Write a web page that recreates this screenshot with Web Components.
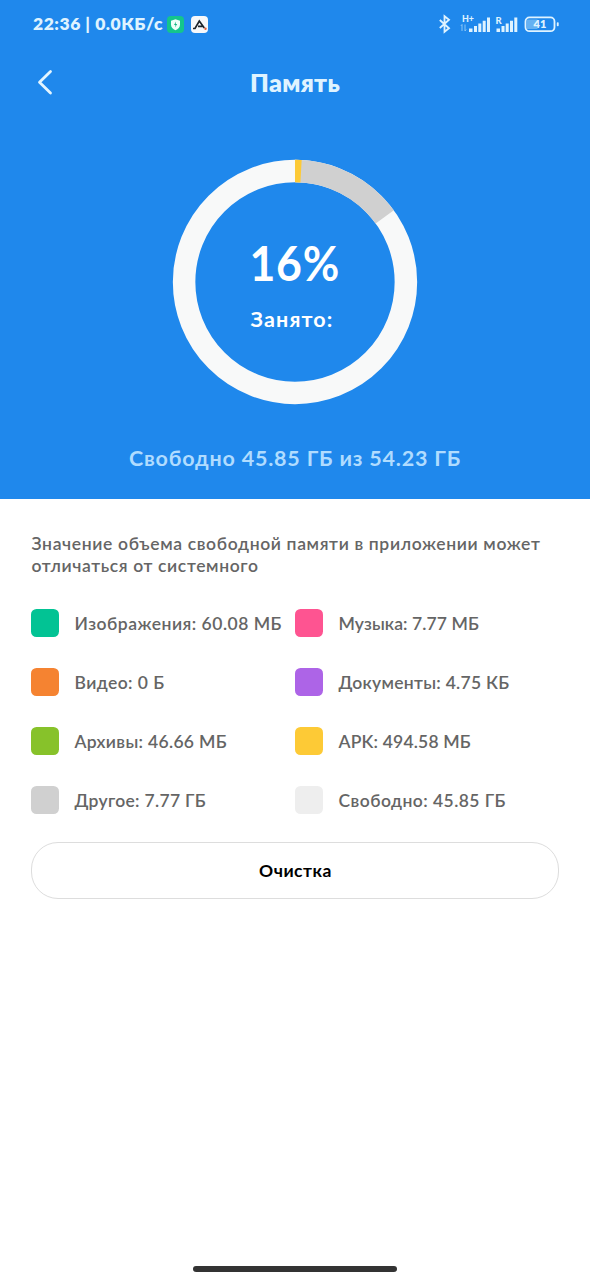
<!DOCTYPE html>
<html lang="ru">
<head>
<meta charset="utf-8">
<title>Память</title>
<style>
html,body{margin:0;background:#fff}
body{font-family:Lato,"Noto Sans",sans-serif;font-weight:600}
</style>
</head>
<body>
<storage-screen></storage-screen>
<script>
const make=(name,html,after)=>{
  const t=document.createElement('template');
  t.innerHTML=html;
  customElements.define(name,class extends HTMLElement{
    connectedCallback(){
      if(!this.shadowRoot)this.attachShadow({mode:'open'}).append(t.content.cloneNode(true));
      if(after)after(this,this.shadowRoot);
    }
  });
};

/* One line of text tracked out to the given width. */
make('tracked-text',`<style>:host{display:block;white-space:nowrap}span{display:inline-block}</style><span><slot></slot></span>`,(el,root)=>{
  const s=root.querySelector('span');
  const n=root.querySelector('slot').assignedNodes({flatten:true}).map(x=>x.textContent).join('').trim().length;
  const w=s.getBoundingClientRect().width;
  if(n)s.style.letterSpacing=((+el.getAttribute('width')-w)/n).toFixed(3)+'px';
});

make('status-bar',`<style>
:host{display:flex;align-items:center;height:48px;box-sizing:border-box;padding:0 31px 0 33px;color:#dff3ff;font-size:17.500px;font-weight:800;line-height:20px}
.app{margin-left:4px}.app+.app{margin-left:7px}
.right{display:flex;align-items:center;margin-left:auto}
svg{display:block}
</style>
<tracked-text width="130">22:36 | 0.0КБ/с</tracked-text>
<svg class="app" width="17" height="17" viewBox="0 0 17 17"><rect width="17" height="17" rx="4" fill="#14c58c"/><path d="M8.500 3.200 13 4.700v4c0 2.500-1.800 4.400-4.500 5.500C5.800 13.100 4 11.200 4 8.700v-4z" fill="#effff8"/><path d="M9 5.500 7 9h1.500L8 11.500 10.200 8H8.700z" fill="#14b583"/></svg>
<svg class="app" width="17" height="17" viewBox="0 0 17 17"><rect width="17" height="17" rx="4" fill="#f6f8fa"/><path d="M2 12.500H4L8.300 5 13.300 12M7 10.300H11.500" fill="none" stroke="#1c2329" stroke-width="1.700"/><circle cx="14.500" cy="12.800" r="1.200" fill="#e45b3a"/></svg>
<div class="right">
<svg width="122" height="20" viewBox="0 0 122 20" fill="#dff3ff">
<path d="M2.800 6 12 14.300 7.500 17.800V2.200L12 5.700 2.800 14" fill="none" stroke="#dff3ff" stroke-width="1.800"/>
<text x="25" y="8" font-size="8.500" font-weight="900" textLength="12" lengthAdjust="spacingAndGlyphs">H+</text>
<path d="M25 10.500v6.500M23.800 12l1.200-1.500M28 10.500v6.500M28 17l1.200-1.500" stroke="#8bc6f5" stroke-width="1" fill="none"/>
<path d="M32 14.500h3.500V18h-3.500zM37 12h3v6h-3zM41.300 9.500h3V18h-3zM45.700 6.800h3V18h-3zM50 3.500h3V18H50z"/>
<text x="58.500" y="9.500" font-size="9.500" font-weight="900">R</text>
<path d="M59.500 14.500h3.500V18h-3.500zM64.500 12h3v6h-3zM68.700 9.500h3V18h-3zM73 6.800h3V18h-3zM77.300 3.500h3V18h-3z"/>
<rect x="90" y="5.500" width="10.500" height="9.500" fill="#65b1f2"/>
<rect x="88.500" y="3.400" width="29" height="13.800" rx="4" fill="none" stroke="#dff3ff" stroke-width="1.800"/>
<rect x="119.800" y="8.300" width="1.900" height="4" rx=".8"/>
<text x="103" y="14.200" font-size="11" font-weight="800" text-anchor="middle">41</text>
</svg></div>`);

make('title-bar',`<style>
:host{display:grid;grid-template-columns:80px 1fr 80px;align-items:center;height:67px;margin-bottom:1px;color:#dff3ff;font-size:25px;font-weight:800;line-height:30px}
svg{display:block;margin-left:36px}
tracked-text{justify-self:center}
</style>
<svg width="18" height="28" viewBox="0 0 18 28"><path d="M14.500 3.500 3.500 14.300 14.500 25" fill="none" stroke="#e3f5ff" stroke-width="2.800" stroke-linecap="round" stroke-linejoin="round"/></svg>
<tracked-text width="90"><slot></slot></tracked-text>`);

make('usage-ring',`<style>
:host{display:grid;width:246px;height:246px;color:#fff}
svg,.label{grid-area:1/1}
.label{display:flex;flex-direction:column;align-items:center}
.pct{font-size:48px;line-height:58px;font-weight:700;margin-top:75px;transform:scaleX(.93)}
.cap{font-size:21.500px;line-height:26px;font-weight:700;margin-top:14px;margin-right:6px}
</style>
<svg width="246" height="246" viewBox="-123 -123 246 246" fill="none" stroke-width="22.500">
<circle r="110.900" stroke="#f8f9f9"/>
<circle r="110.900" stroke="#d0d0d0" pathLength="360" stroke-dasharray="54 306" transform="rotate(-90)"/>
<circle r="110.900" stroke="#fdca36" pathLength="360" stroke-dasharray="3.200 356.800" transform="rotate(-90)"/>
</svg>
<div class="label"><tracked-text class="pct" width="91"><slot name="percent"></slot></tracked-text><tracked-text class="cap" width="83"><slot name="caption"></slot></tracked-text></div>`);

make('storage-header',`<style>
:host{display:flex;flex-direction:column;height:499px;background:#1f88ec}
usage-ring{align-self:center;margin-top:42.500px}
.free{align-self:center;margin-top:40.500px;font-size:21.500px;line-height:26px;font-weight:700;color:#b0dcff}
</style>
<status-bar></status-bar>
<title-bar>Память</title-bar>
<usage-ring><span slot="percent">16%</span><span slot="caption">Занято:</span></usage-ring>
<tracked-text class="free" width="332">Свободно 45.85 ГБ из 54.23 ГБ</tracked-text>`);

make('legend-item',`<style>
:host{display:flex;align-items:center;height:28px;gap:15.500px}
i{flex:none;width:28px;height:28px;border-radius:5.500px;background:var(--swatch)}
::slotted(*){padding-top:2px}
</style><i></i><slot></slot>`);

make('pill-button',`<style>
:host{display:block}
button{display:flex;align-items:center;justify-content:center;width:100%;height:57px;border:1px solid #ddd;border-radius:27px;background:#fff;color:#000;font:inherit;font-weight:700;padding:0 0 0 1px}
</style><button><slot></slot></button>`);

make('storage-screen',`<style>
:host{display:flex;flex-direction:column;width:590px;height:1280px;box-sizing:border-box;background:#fff;overflow:hidden}
main{padding:34px 31px 0;font-size:17.500px;line-height:22px;color:#656565}
.note{padding-left:.5px}
.legend{display:grid;grid-template-columns:264px 264px;row-gap:31px;margin-top:32px}
pill-button{margin-top:28px}
.home{align-self:center;width:204px;height:6px;border-radius:3px;background:#333;margin:auto 0 8px}
</style>
<storage-header></storage-header>
<main>
<tracked-text class="note" width="509">Значение объема свободной памяти в приложении может</tracked-text>
<tracked-text class="note" width="227">отличаться от системного</tracked-text>
<div class="legend">
<legend-item style="--swatch:#02c394"><tracked-text width="207.500">Изображения: 60.08 МБ</tracked-text></legend-item>
<legend-item style="--swatch:#fe5491"><tracked-text width="140.500">Музыка: 7.77 МБ</tracked-text></legend-item>
<legend-item style="--swatch:#f58331"><tracked-text width="90">Видео: 0 Б</tracked-text></legend-item>
<legend-item style="--swatch:#ad64e7"><tracked-text width="171">Документы: 4.75 КБ</tracked-text></legend-item>
<legend-item style="--swatch:#87c22a"><tracked-text width="152.500">Архивы: 46.66 МБ</tracked-text></legend-item>
<legend-item style="--swatch:#fdca36"><tracked-text width="132.500">APK: 494.58 МБ</tracked-text></legend-item>
<legend-item style="--swatch:#d0d0d0"><tracked-text width="131.500">Другое: 7.77 ГБ</tracked-text></legend-item>
<legend-item style="--swatch:#eee"><tracked-text width="167.500">Свободно: 45.85 ГБ</tracked-text></legend-item>
</div>
<pill-button><tracked-text width="73">Очистка</tracked-text></pill-button>
</main>
<div class="home"></div>`);
</script>
</body>
</html>
